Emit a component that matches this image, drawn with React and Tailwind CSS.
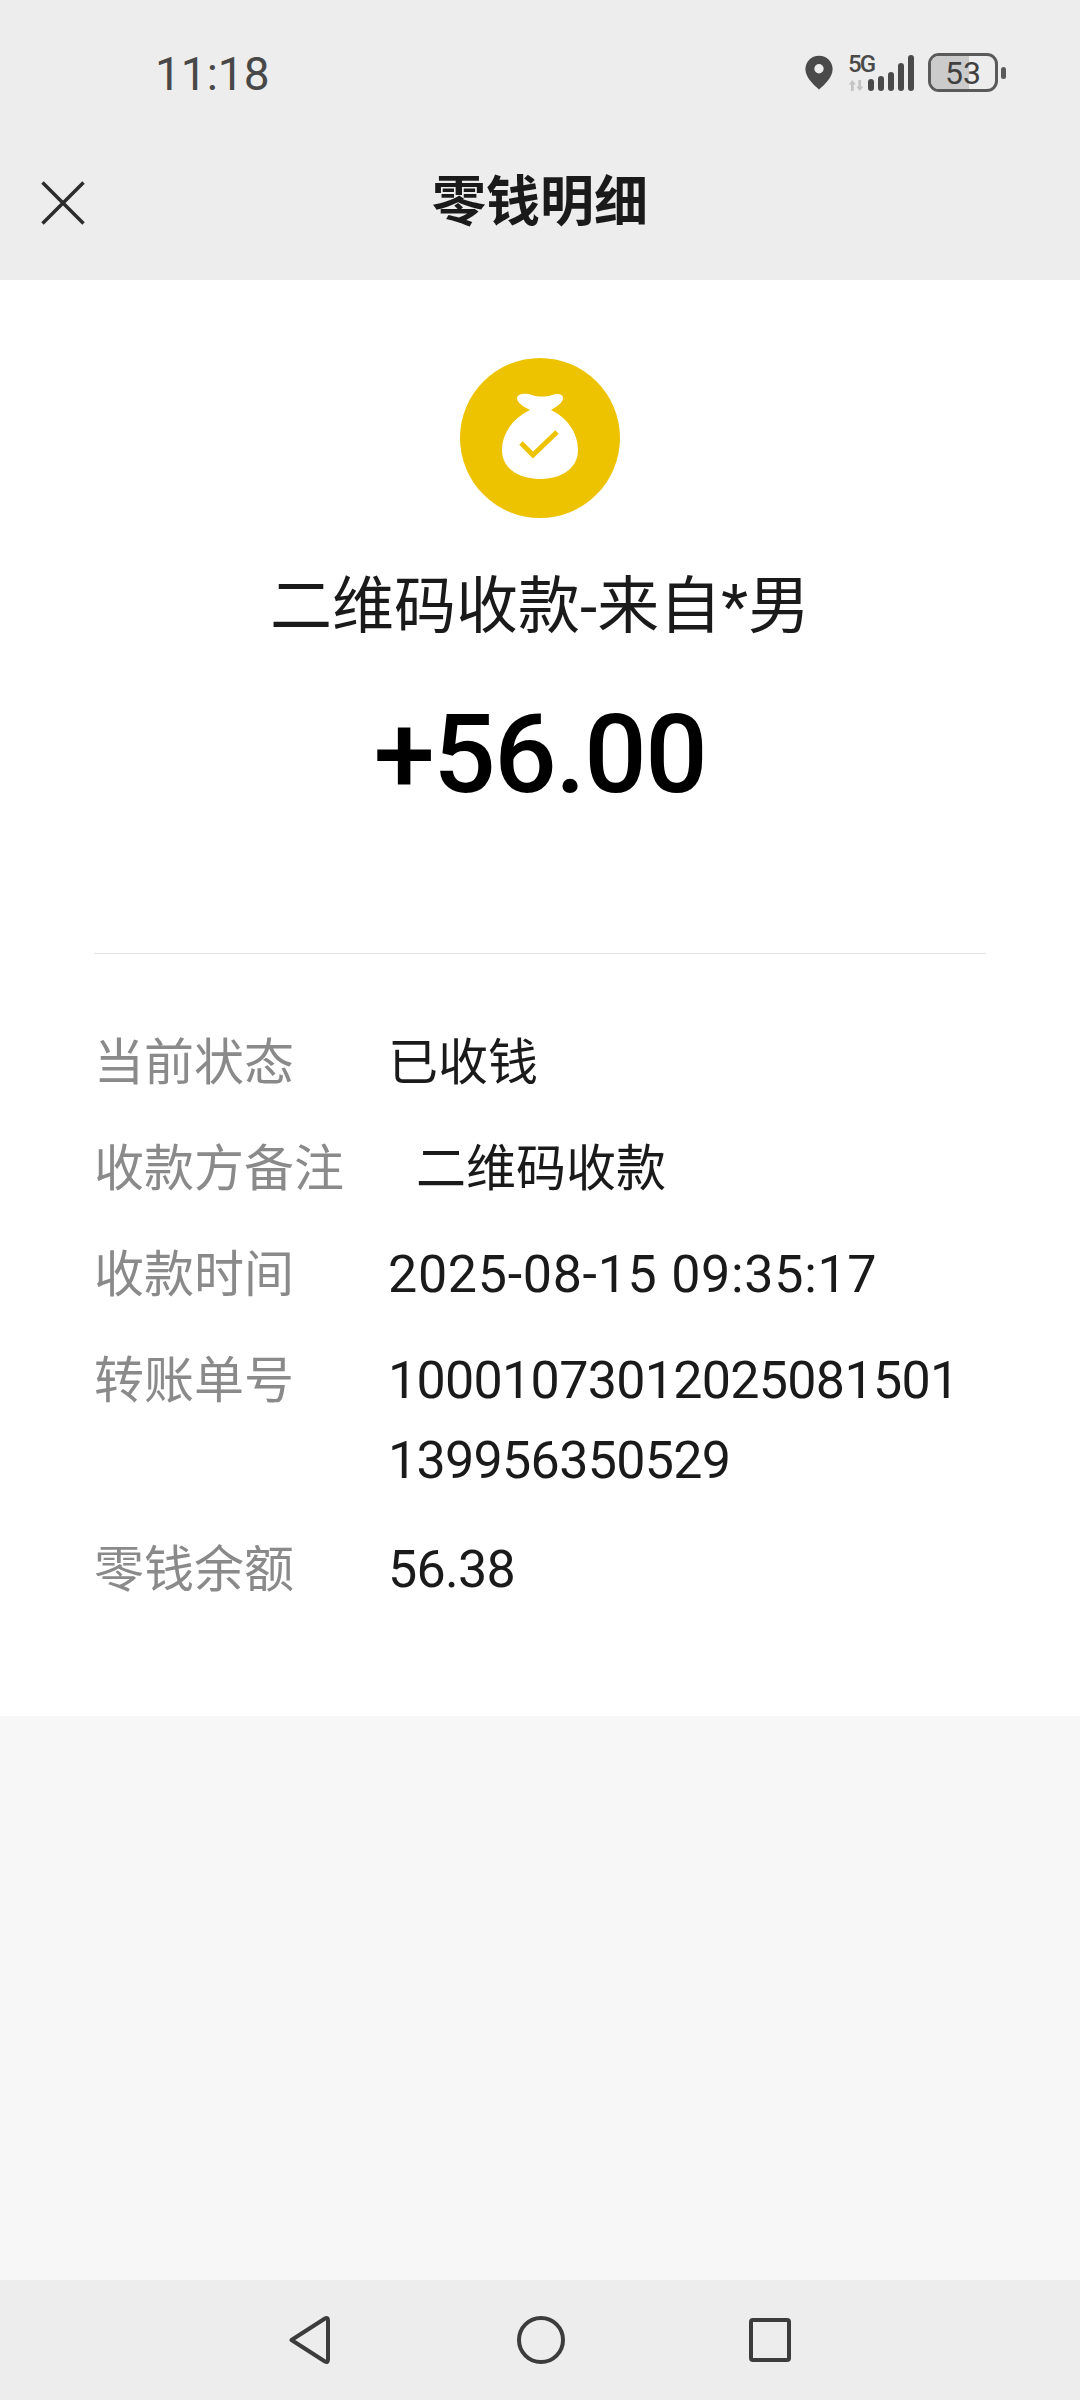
import React from "react";

const fontStack = "font-['Roboto','Noto_Sans_CJK_SC',sans-serif]";

const rows = [
  { label: "当前状态", value: "已收钱", className: "text-[50px]" },
  { label: "收款方备注", value: "二维码收款", className: "text-[50px] pl-7" },
  { label: "收款时间", value: "2025-08-15 09:35:17", className: "text-[52px] tracking-[0.7px]" },
  { label: "转账单号", value: "10001073012025081501 139956350529", className: "text-[52px] tracking-[-0.7px] pb-[3px]" },
  { label: "零钱余额", value: "56.38", className: "text-[52px] tracking-[-0.7px]" },
];

const StatusBar = () => (
  <div className="h-[140px] flex justify-between items-start pl-[155px] pr-[74px] pt-[44px]">
    <span className="text-[46px] leading-[60px] text-[#484848]">11:18</span>
    <div className="flex items-center mt-[9px]">
      <svg width="30" height="37" viewBox="0 0 32 38">
        <path
          d="M16 1C7.5 1 1.5 7.5 1.5 15.5C1.5 24 10 32 16 37C22 32 30.5 24 30.5 15.5C30.5 7.5 24.5 1 16 1Z"
          fill="#4a4a4a"
        />
        <circle cx="16" cy="15" r="5" fill="#ededed" />
      </svg>
      <div className="ml-[14px] flex flex-col w-[20px] items-start h-[36px]">
        <span className="text-[24px] leading-[18px] font-medium text-[#4a4a4a] tracking-[-2px]">5G</span>
        <svg width="16" height="11" viewBox="0 0 16 12" className="mt-[7px]">
          <path d="M4 0L8 5H5.5V12H2.5V5H0Z M12 12L8.5 7H10.5V0H13.5V7H16Z" fill="#c4c4c4" />
        </svg>
      </div>
      <div className="flex items-end gap-[4px] h-[36px]">
        <div className="w-[6px] h-[12px] rounded-full bg-[#4a4a4a]" />
        <div className="w-[6px] h-[15px] rounded-full bg-[#4a4a4a]" />
        <div className="w-[6px] h-[19px] rounded-full bg-[#4a4a4a]" />
        <div className="w-[6px] h-[28px] rounded-full bg-[#4a4a4a]" />
        <div className="w-[6px] h-[36px] rounded-full bg-[#4a4a4a]" />
      </div>
      <div className="ml-[14px] relative w-[70px] h-[39px] rounded-[11px] border-[3px] border-[#5a5a5a] overflow-hidden flex items-center justify-center">
        <div className="absolute left-0 top-0 bottom-0 w-[38px] bg-[#cbcbcb]" />
        <span className="relative text-[32px] leading-none text-[#404040]">53</span>
      </div>
      <div className="ml-[3px] w-[5px] h-[12px] rounded-full bg-[#5a5a5a]" />
    </div>
  </div>
);

const BagIcon = () => (
  <svg width="160" height="160" viewBox="0 0 160 160">
    <circle cx="80" cy="80" r="80" fill="#edc300" />
    <path
      d="M57 40C58 35 66 35 72 37C78 39 86 39 92 37C97 35 103 36 103 40C103 45 96 49 91 52C106 59 118 74 118 92C118 110 102 121 80 121C58 121 42 110 42 92C42 74 55 59 70 52C64 49 57 45 57 40Z"
      fill="#ffffff"
    />
    <path d="M61 85L73 97L97 74" fill="none" stroke="#edc300" strokeWidth="5" />
  </svg>
);

const App = () => {
  return (
    <div className={`w-[1080px] h-[2400px] flex flex-col bg-[#f7f7f7] ${fontStack}`}>
      <div className="bg-[#ededed] h-[280px]">
        <StatusBar />
        <div className="relative h-[140px] flex items-center justify-center -mt-[7px]">
          <svg width="44" height="44" viewBox="0 0 44 44" className="absolute left-[41px] top-1/2 -translate-y-1/2">
            <path d="M1.5 1.5L42.5 42.5M42.5 1.5L1.5 42.5" stroke="#2c2c2c" strokeWidth="3.5" fill="none" />
          </svg>
          <h1 className="text-[54px] font-semibold text-[#1a1a1a] leading-none">零钱明细</h1>
        </div>
      </div>

      <div className="bg-white h-[1436px] flex flex-col items-center pt-[78px]">
        <BagIcon />
        <p className="mt-[53px] text-[62px] leading-[72px] text-[#1a1a1a]">二维码收款-来自*男</p>
        <p className="mt-[52px] text-[110px] leading-[120px] font-medium text-black tracking-[-1.5px]">+56.00</p>

        <div className="mt-[138px] w-[892px] border-t border-[#e5e5e5] pt-[69px]">
          {rows.map((row) => (
            <div key={row.label} className="flex mb-[26px]">
              <span className="w-[294px] shrink-0 text-[50px] leading-[80px] text-[#8a8a8a]">{row.label}</span>
              <span className={`leading-[80px] text-[#1a1a1a] break-words w-[598px] ${row.className}`}>{row.value}</span>
            </div>
          ))}
        </div>
      </div>

      <div className="flex-1" />

      <div className="h-[120px] bg-[#ededed] flex items-center justify-center">
        <svg width="41" height="48" viewBox="0 0 41 48" className="mr-[187px]">
          <path d="M2.5 24L36 2.5Q39 1 39 4.5V43.5Q39 47 36 45.5Z" fill="none" stroke="#3c3c3c" strokeWidth="4" strokeLinejoin="round" />
        </svg>
        <svg width="48" height="48" viewBox="0 0 48 48" className="mr-[184px]">
          <circle cx="24" cy="24" r="22" fill="none" stroke="#3c3c3c" strokeWidth="4" />
        </svg>
        <svg width="42" height="44" viewBox="0 0 42 44">
          <rect x="2" y="2" width="38" height="40" rx="2" fill="none" stroke="#3c3c3c" strokeWidth="4" />
        </svg>
      </div>
    </div>
  );
};

export default App;
